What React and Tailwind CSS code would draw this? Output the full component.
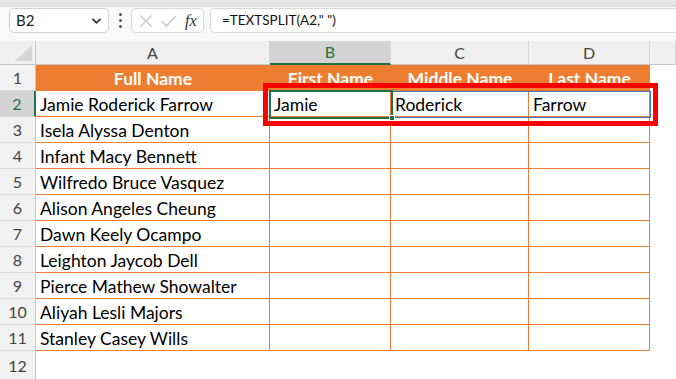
import React from 'react'

const rows = [
  ['Jamie Roderick Farrow', 'Jamie', 'Roderick', 'Farrow'],
  ['Isela Alyssa Denton'],
  ['Infant Macy Bennett'],
  ['Wilfredo Bruce Vasquez'],
  ['Alison Angeles Cheung'],
  ['Dawn Keely Ocampo'],
  ['Leighton Jaycob Dell'],
  ['Pierce Mathew Showalter'],
  ['Aliyah Lesli Majors'],
  ['Stanley Casey Wills'],
]

const font = { fontFamily: 'Lato, "Liberation Sans", sans-serif' }

function ColHead({ label, w, active }) {
  return (
    <div
      className={
        'flex items-center justify-center border-r border-[#d6d6d6] text-[16px] ' +
        (active ? 'bg-[#d3d3d3] text-[#217346] border-b-2 border-b-[#217346]' : 'text-[#444] border-b border-b-[#c6c6c6]') +
        ' ' + w
      }
    >
      {label}
    </div>
  )
}

function RowHead({ n, active }) {
  return (
    <div
      className={
        'w-[36px] h-[26px] flex items-center justify-center text-[16px] border-b border-[#dadada] ' +
        (active ? 'bg-[#d3d3d3] text-[#217346] border-r-2 border-r-[#217346]' : 'bg-[#f2f2f2] text-[#444] border-r border-r-[#c6c6c6]')
      }
    >
      {n}
    </div>
  )
}

function Cell({ w, children }) {
  return (
    <div className={'h-[26px] border-b border-r border-[#ed7d31] pl-[4px] pt-[3px] text-[17.5px] text-black leading-[22px] whitespace-nowrap overflow-hidden ' + w}>
      {children}
    </div>
  )
}

export default function App() {
  return (
    <div className="relative w-[676px] h-[379px] overflow-hidden bg-white" style={font}>
      {/* top ribbon edge */}
      <div className="h-[7px] bg-[#e4e4e4] border-b border-[#d8d8d8]" />

      {/* formula bar */}
      <div className="h-[34px] bg-[#f9f9f9] flex items-start pt-[1px]">
        <div className="ml-[9px] w-[100px] h-[25px] bg-white border border-[#d2d2d2] rounded-[5px] flex items-center justify-between pl-[6px] pr-[6px]">
          <span className="text-[15px] text-[#222]">B2</span>
          <svg width="11" height="8" viewBox="0 0 11 8">
            <path d="M1.5 1.8 L5.5 5.8 L9.5 1.8" fill="none" stroke="#333" strokeWidth="1.8" />
          </svg>
        </div>
        <div className="w-[22px] h-[25px] flex flex-col items-center justify-center gap-[3px]">
          <span className="w-[3px] h-[3px] bg-[#555] rounded-full" />
          <span className="w-[3px] h-[3px] bg-[#555] rounded-full" />
          <span className="w-[3px] h-[3px] bg-[#555] rounded-full" />
        </div>
        <div className="w-[73px] h-[25px] bg-white border border-[#d8d8d8] rounded-[5px] flex items-center pl-[7px] gap-[8px]">
          <svg width="14" height="14" viewBox="0 0 14 14">
            <path d="M1.5 1.5 L12.5 12.5 M12.5 1.5 L1.5 12.5" stroke="#c4c4c4" strokeWidth="1.3" fill="none" />
          </svg>
          <svg width="16" height="14" viewBox="0 0 16 14">
            <path d="M1 7.5 L5.5 12 L15 2" stroke="#c4c4c4" strokeWidth="1.3" fill="none" />
          </svg>
          <span className="text-[16px] italic text-[#333] leading-none" style={{ fontFamily: '"Liberation Serif", serif' }}>fx</span>
        </div>
        <div className="ml-[6px] flex-1 h-[25px] bg-white border border-[#d8d8d8] rounded-l-[5px] border-r-0 flex items-center pl-[11px]">
          <span className="text-[13.5px] text-[#111]">=TEXTSPLIT(A2," ")</span>
        </div>
      </div>

      {/* column headers */}
      <div className="flex h-[24px] bg-[#f0f0f0]">
        <div className="w-[36px] flex items-end justify-end pr-[3px] pb-[3px] border-r border-b border-[#c6c6c6]">
          <svg width="17" height="16" viewBox="0 0 17 16">
            <path d="M17 0 L17 16 L0 16 Z" fill="#d6d6d6" />
          </svg>
        </div>
        <ColHead label="A" w="w-[234px]" />
        <ColHead label="B" w="w-[121px]" active />
        <ColHead label="C" w="w-[138px]" />
        <ColHead label="D" w="w-[121px]" />
        <ColHead label="" w="flex-1" />
      </div>

      {/* row 1: table header */}
      <div className="flex h-[26px]">
        <RowHead n={1} />
        <div className="w-[614px] h-[26px] bg-[#ed7d31] flex text-white font-bold text-[17.5px] leading-[22px] pt-[3px]">
          <div className="w-[234px] text-center">Full Name</div>
          <div className="w-[121px] text-center">First Name</div>
          <div className="w-[138px] text-center">Middle Name</div>
          <div className="w-[121px] text-center">Last Name</div>
        </div>
      </div>

      {rows.map((r, i) => (
        <div key={i} className="flex h-[26px]">
          <RowHead n={i + 2} active={i === 0} />
          <Cell w="w-[234px]">{r[0]}</Cell>
          <Cell w="w-[121px]">{r[1]}</Cell>
          <Cell w="w-[138px]">{r[2]}</Cell>
          <Cell w="w-[121px]">{r[3]}</Cell>
        </div>
      ))}

      <div className="flex h-[28px]">
        <div className="w-[36px] h-[28px] flex items-start pt-[3px] justify-center text-[16px] bg-[#f2f2f2] text-[#444] border-r border-[#c6c6c6]">
          12
        </div>
      </div>

      {/* spill range C2:D2 */}
      <div className="absolute left-[391px] top-[91px] w-[260px] h-[27px] border border-[#4472c4]" />
      {/* active cell B2 */}
      <div className="absolute left-[269px] top-[90px] w-[124px] h-[29px] border-2 border-[#217346]" />
      <div className="absolute left-[389px] top-[115px] w-[6px] h-[6px] bg-[#217346] border border-white" />
      {/* red highlight */}
      <div className="absolute left-[263px] top-[83px] w-[395px] h-[43px] border-[5px] border-[#ff0000]" />
    </div>
  )
}
